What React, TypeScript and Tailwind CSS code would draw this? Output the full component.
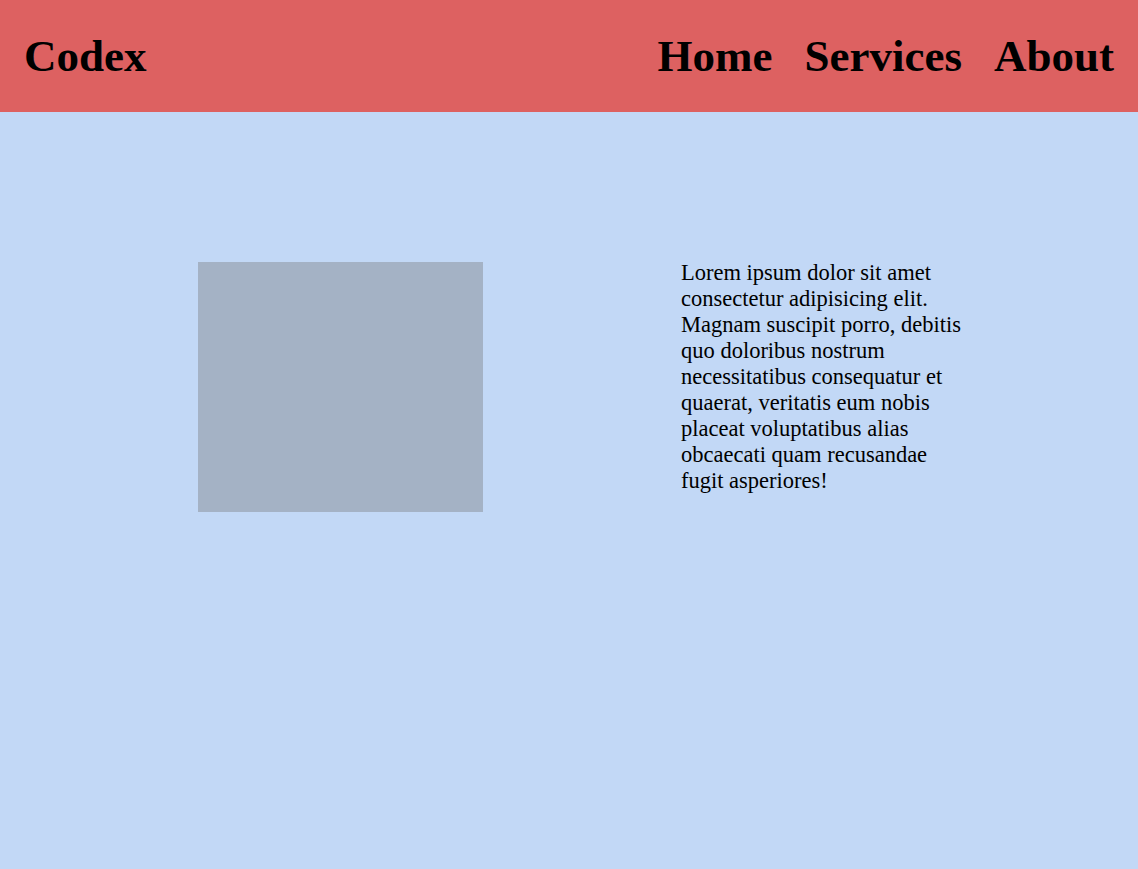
import React from 'react';

const serif = { fontFamily: '"Liberation Serif", "Times New Roman", serif' };

export default function App() {
    return (
        <div className="min-h-[869px] bg-[#c2d8f6] text-black" style={serif}>
            <header className="h-[112px] bg-[#dd6161] flex items-center justify-between px-6">
                <h1 className="text-[45px] font-bold leading-none">Codex</h1>
                <nav className="flex gap-8 text-[45px] font-bold leading-none">
                    <a href="#">Home</a>
                    <a href="#">Services</a>
                    <a href="#">About</a>
                </nav>
            </header>
            <main className="flex items-start pt-[148px] pl-[198px] gap-[198px]">
                <div className="w-[285px] h-[250px] mt-[2px] bg-[#a4b2c5]" />
                <p className="w-[285px] text-[22.5px] leading-[26px]">
                    Lorem ipsum dolor sit amet consectetur adipisicing elit. Magnam suscipit porro, debitis quo
                    doloribus nostrum necessitatibus consequatur et quaerat, veritatis eum nobis placeat
                    voluptatibus alias obcaecati quam recusandae fugit asperiores!
                </p>
            </main>
        </div>
    );
}
